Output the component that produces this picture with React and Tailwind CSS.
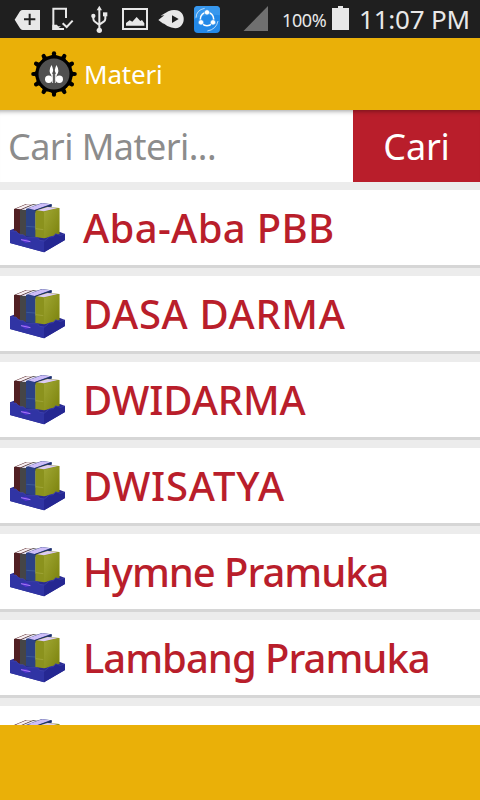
const materi = [
  { title: "Aba-Aba PBB", spacing: "tracking-[0.35px]" },
  { title: "DASA DARMA", spacing: "tracking-[0.65px]" },
  { title: "DWIDARMA", spacing: "tracking-[-0.1px]" },
  { title: "DWISATYA", spacing: "tracking-[0.8px]" },
  { title: "Hymne Pramuka", spacing: "tracking-[-1.05px]" },
  { title: "Lambang Pramuka", spacing: "tracking-[-1px]" },
  { title: "", spacing: "" },
];

function NotificationIcons() {
  return (
    <svg viewBox="0 0 720 114" className="h-[38px] w-[240px] shrink-0">
      {/* tag */}
      <path d="M44 59 60 34Q63 30 68 30H120V90H68Q63 90 60 85Z" fill="#e8e8e8" />
      <path d="M89 41V75M72 58H106" stroke="#1f1f1f" strokeWidth="6" />
      {/* phone check */}
      <path d="M198 54V26H160V87H192" fill="none" stroke="#e8e8e8" strokeWidth="6" />
      <path d="M157 74H171L174 79H183L176 84H184L193 90H157Z" fill="#e8e8e8" />
      <path d="M188 70 200 81 218 62" fill="none" stroke="#e8e8e8" strokeWidth="6" />
      {/* usb */}
      <g fill="#e8e8e8">
        <path d="M298 17 306 31H290Z" />
        <circle cx="298" cy="91" r="8" />
        <circle cx="280" cy="48" r="6.5" />
        <path d="M309 37H322V49H309Z" />
        <path d="M298 27V90M280 48V56Q280 61 285 65L298 75M316 45V56Q316 61 311 65L298 74" fill="none" stroke="#e8e8e8" strokeWidth="6" />
      </g>
      {/* picture */}
      <path d="M369 27H441V87H369Z" fill="none" stroke="#e8e8e8" strokeWidth="6" />
      <path d="M378 77V69L389 61 397 65 410 51 421 63 426 60 433 70V77Z" fill="#e8e8e8" />
      {/* play */}
      <path d="M475 60 493 46 482 47 505 34Q518 28 531 31C558 37 558 78 532 84Q517 86 502 78L489 69 492 73Z" fill="#e8e8e8" />
      <path d="M516 46 536 57 516 69Z" fill="#1f1f1f" />
      {/* share app */}
      <rect x="582" y="18" width="78" height="81" rx="12" fill="#2389e8" />
      <path d="M582 58V30Q582 18 594 18H648Q660 18 660 30V46Q625 39 582 58Z" fill="#3797ed" />
      <g fill="none" stroke="#fff">
        <circle cx="621" cy="57" r="20" strokeWidth="4.5" />
        <path d="M588 53Q589 30 614 25M654 63Q649 88 622 93" strokeWidth="2" />
      </g>
      <g fill="#fff" stroke="#2b8eea" strokeWidth="2">
        <circle cx="621" cy="37" r="8" />
        <circle cx="603" cy="67" r="8" />
        <circle cx="639" cy="67" r="8" />
      </g>
    </svg>
  );
}

function StatusBar() {
  return (
    <div className="flex h-[38px] shrink-0 items-start bg-[#1f1f1f] text-[#e8e8e8]">
      <NotificationIcons />
      <svg viewBox="0 0 28 38" className="h-[38px] w-7 shrink-0">
        <path d="M3.5 31 28 6V31Z" fill="#707070" />
      </svg>
      <span className="ml-[14px] mt-[7px] w-[46px] whitespace-nowrap text-[18px] leading-[26px] tracking-[-0.4px]">
        100%
      </span>
      <svg viewBox="0 0 17 38" className="ml-1 h-[38px] w-[17px] shrink-0">
        <path d="M0 8H6V6H11V8H17V30H0Z" fill="#e8e8e8" />
      </svg>
      <span className="ml-[10px] mt-[2px] whitespace-nowrap text-[26px] leading-[34px] tracking-[-0.2px]">
        11:07 PM
      </span>
    </div>
  );
}

function Logo() {
  const teeth = [0, 30, 60, 90, 120, 150, 180, 210, 240, 270, 300, 330];
  return (
    <svg viewBox="-24 -24 48 48" className="size-12 shrink-0">
      {teeth.map((angle) => (
        <g key={angle} transform={`rotate(${angle})`}>
          <path d="M-5-17Q-1.8-18-1.6-21H1.6Q1.8-18 5-17Z" />
          <circle cy="-20.7" r="2.1" />
        </g>
      ))}
      <circle r="18.7" />
      <circle r="15.5" fill="#505050" />
      <g fill="#fff">
        <circle cx="-5.3" cy="5.3" r="3.7" />
        <circle cx="5.3" cy="5.3" r="3.7" />
        <path d="M-2.5-9Q-6-3-2.8 1L-1.8 6-1.7-1Q.2-4-2.5-9ZM2.5-9Q6-3 2.8 1L1.8 6 1.7-1Q-.2-4 2.5-9Z" />
        <path d="M-1.4 0V9M1.4 0V9" stroke="#fff" strokeWidth=".8" />
      </g>
    </svg>
  );
}

function Books() {
  return (
    <svg viewBox="30 51 165 153" className="ml-[10px] mt-3 h-[51px] w-[55px] shrink-0">
      <defs>
        <linearGradient id="cover" x2="1" y2="1">
          <stop stopColor="#a0a734" />
          <stop offset="1" stopColor="#7b820c" />
        </linearGradient>
      </defs>
      <path d="M30 136 50 128 180 141 195 147V165L132 202 30 174Z" fill="#292a91" />
      {/* maroon */}
      <path d="M42 72 78 57 104 59 66 76V145H42Z" fill="#512023" />
      <path d="M47 71 80 58 98 58 62 73Z" fill="#f7eff2" />
      {/* gray */}
      <path d="M60 76 100 58 116 60 84 76V152H60Z" fill="#454547" />
      <path d="M64 74 98 60 110 61 78 75Z" fill="#e9e4f2" />
      {/* blue */}
      <path d="M78 72 125 54 155 58V76L107 84V158L78 153Z" fill="#2b4185" />
      <path d="M84 70 126 55 151 58 104 75Z" fill="#cdbdf8" />
      <path d="M103 76 155 58V62L107 80Z" fill="#1e2f69" />
      <path d="M79 124 105 126" stroke="#45679d" strokeWidth="2" />
      {/* olive */}
      <path d="M106 80Q107 76 113 75L142 65 178 69V146L132 160 106 156Z" fill="#8b921d" />
      <path d="M111 76 143 66 174 69 132 79Z" fill="#dccbf3" />
      <path d="M132 81 178 69V146L132 160Z" fill="url(#cover)" />
      <path d="M108 131 130 134" stroke="#a6ab42" strokeWidth="2" />
      {/* tray */}
      <path d="M30 138 48 138 58 149 70 149 79 158 112 158 119 166 133 168V202L30 174Z" fill="#3034a4" />
      <path d="M132 168 148 156 160 155 167 146 181 151 195 147V165L132 202Z" fill="#252792" />
      <path d="M31 138 48 138 58 149 70 149 79 158 112 158 119 166 133 168 148 156 160 155 167 146 181 151 194 147" fill="none" stroke="#4347b2" strokeWidth="2" />
      <path d="M61 163 78 161 94 170 76 174Z" fill="#5130cf" />
      <path d="M63 164 91 170" stroke="#a57cf0" strokeWidth="3" />
    </svg>
  );
}

function App() {
  return (
    <div className="flex h-[800px] w-[480px] flex-col overflow-hidden bg-[#ececec] font-['Noto_Sans',sans-serif]">
      <StatusBar />
      <header className="flex h-[72px] shrink-0 items-center bg-[#eab008] pl-[30px] text-white">
        <Logo />
        <h1 className="ml-[6px] text-[26px] leading-9 tracking-[-0.2px]">Materi</h1>
      </header>

      <form className="flex h-[72px] shrink-0 bg-white" onSubmit={(e) => e.preventDefault()}>
        <input
          className="w-[353px] bg-transparent pl-2 pt-[2px] text-[36px] tracking-[-0.55px] text-[#8c8c8c] shadow-[inset_0_6px_5px_-5px_#00000066] outline-none placeholder:text-[#8c8c8c]"
          placeholder="Cari Materi..."
        />
        <button className="w-[127px] bg-[#b91e2b] pt-[2px] text-[36px] tracking-[-0.2px] text-white shadow-[inset_0_6px_5px_-5px_#00000066]">
          Cari
        </button>
      </form>

      <ul className="h-[543px] shrink-0 overflow-hidden">
        {materi.map((item, i) => (
          <li key={i} className="mt-2 flex h-[78px] border-b-[3px] border-[#d6d6d6] bg-white">
            <Books />
            <span className={`ml-[18px] mt-[10px] whitespace-nowrap text-[40px] font-medium leading-[56px] text-[#b91e2b] ${item.spacing}`}>
              {item.title}
            </span>
          </li>
        ))}
      </ul>
      <footer className="h-[75px] shrink-0 bg-[#eab008]" />
    </div>
  );
}

export default App;
